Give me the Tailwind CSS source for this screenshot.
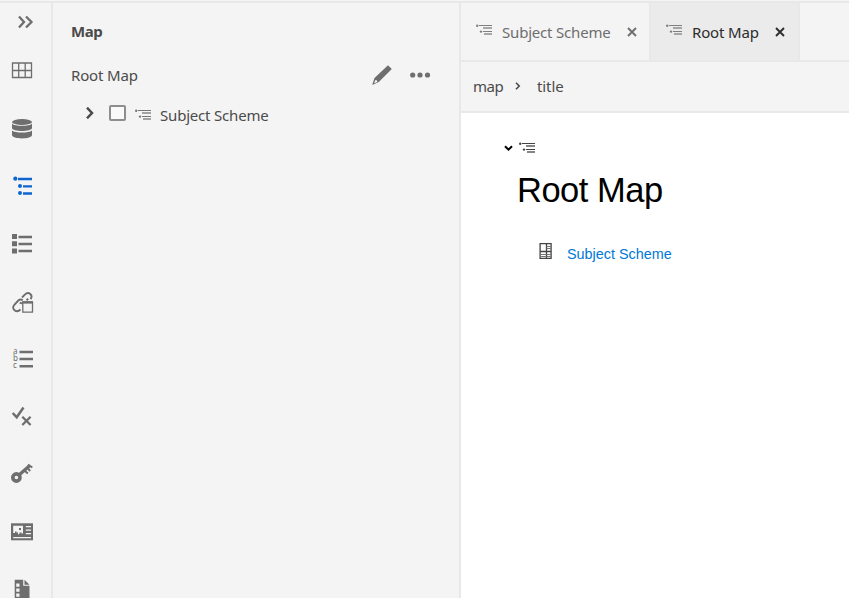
<!DOCTYPE html>
<html lang="en">
<head>
<meta charset="utf-8">
<title>Map editor</title>
<script src="https://cdn.jsdelivr.net/npm/@tailwindcss/browser@4"></script>
</head>
<body class="h-screen overflow-hidden bg-[#f4f4f4] font-['Noto_Sans',sans-serif] text-[15px] text-[#4b4b4b]">
<svg class="hidden">
  <symbol id="map" viewBox="0 0 16 13"><circle cx="1.200" cy="1.700" r="1.200"/><circle cx="5" cy="7.600" r="1.200"/><path d="M3 1h13v1H3zM7 7h9v1H7z"/><path opacity=".65" d="M7 3h9v2H7zM8 9h8v2H8z"/></symbol>
  <symbol id="close" viewBox="0 0 10 10"><path d="M1 1l8 8M9 1l-8 8" fill="none" stroke="currentColor" stroke-width="1.900"/></symbol>
</svg>
<div class="flex h-full flex-col border-t border-[#f4f4f4]">
<div class="flex min-h-0 flex-1 border-t-2 border-[#e8e8e8]">
  <nav class="grid w-[53px] shrink-0 grid-rows-[39px_58px_58px_57px_58px_58px_57px_57px_58px_58px_58px] overflow-hidden border-r-2 border-[#e8e8e8] pl-[10px] text-[#6e6e6e] [&_svg]:block [&_svg]:h-6 [&_svg]:w-6">
    <div class="pt-[7px]"><svg fill="none" stroke="currentColor" stroke-width="2.300"><path d="M9 6.500l5 5.500-5 5.500M16 6.500l5.500 5.500-5.500 5.500"/></svg></div>
    <div class="pt-[17px]"><svg fill="none" stroke="currentColor" stroke-width="1.300"><path d="M2.500 4h19v14.500h-19zM2.500 11.500h19M8.700 4v14.500M15.200 4v14.500"/></svg></div>
    <div class="pt-[17px]"><svg fill="currentColor"><ellipse cx="12" cy="5" rx="10" ry="3"/><path d="M2 6.800C5 9.500 19 9.500 22 6.800V11c0 4-20 4-20 0zM2 13.500c3 2.700 17 2.700 20 0V18c0 4.500-20 4.500-20 0z"/></svg></div>
    <div class="pt-[17px] text-[#0d66d0]"><svg fill="currentColor"><circle cx="5.300" cy="3.700" r="2.100"/><circle cx="10" cy="10.900" r="2"/><circle cx="10" cy="18" r="2"/><path d="M8 2.800h14v2.400H8zM13 10.200h9v2.400h-9zM13 17.300h9v2.400h-9z"/></svg></div>
    <div class="pt-[17px]"><svg fill="currentColor"><path d="M2 2h5v5H2zM2 9.300h5v5H2zM2 16.500h5v5H2zM8.500 3.800H22v2.400H8.500zM8.500 10.800H22v2.400H8.500zM8.500 17.800H22v2.400H8.500z"/></svg></div>
    <div class="pt-[17px]"><svg fill="none" stroke="currentColor" stroke-width="1.900"><path d="M10.500 19.500c-2 2-4.300 2-6 .7-1.900-1.500-1.700-3.700-.2-5.400l4-4.300c1.500-1.300 3-1.300 4.500-.3M12 7.500l2.800-2.800c2-2 3.900-2 5.500-.7 1.600 1.500 1.500 3.500.2 5.200M9.800 12.500c1 .8 1.500.9 2.500.8M16.500 10.200l1.700-1.500"/><path d="M12.800 12.500h9.700v9.700h-9.700z" fill="#f4f4f4" stroke-width="1.300"/><path d="M12.200 12.300h10.800" stroke-width="2.400"/></svg></div>
    <div class="pt-[17px]"><svg fill="currentColor" class="overflow-visible"><path d="M9.500 2.800H23v2.400H9.500zM9.500 9.800H23v2.400H9.500zM9.500 17H23v2.400H9.500z"/></svg>
      <div class="-mt-[25px] ml-[3px] flex h-[24px] w-[5px] flex-col text-[8px] leading-[7px]"><span class="h-[7px]">a</span><span class="h-[7px]">b</span><span class="h-[7px]">c</span></div></div>
    <div class="pt-[17px]"><svg fill="none" stroke="currentColor" stroke-width="2.500"><path d="M2.700 8l4 4.300L13.500 2.500"/><path d="M12.300 11.700l8.300 8.300M20.600 11.700L12.300 20" stroke-width="2.300"/></svg></div>
    <div class="pt-[17px]"><svg fill="none" stroke="currentColor"><circle cx="6.400" cy="15.500" r="3.600" stroke-width="3.600"/><path d="M9 13L19.500 3.800" stroke-width="3.200"/><path d="M18 2.500l4.300 3M14.500 8.500l3.300 3M17.500 6l2.700 3" stroke-width="2"/></svg></div>
    <div class="pt-[17px]"><svg fill="currentColor"><path d="M1 3.300h22v17H1z"/><path fill="#f4f4f4" d="M3.200 5.700h9.800v7.800h-1.500v-1h-2v1.800H8v-1.800H6.500v-1H5v1.500H3.200zM15.800 6H21v1.200h-5.200zM15.800 9.500H21v1.200h-5.200zM15.800 13H21v1.200h-5.200zM3.200 17H21v1.200H3.200z"/><path d="M9 8h2v2H9z"/></svg></div>
    <div class="pt-[17px]"><svg fill="currentColor"><path d="M4.700 1.700h8.500v6h6.300V24H4.700zM14.500 1.700l5 5h-5z"/><path fill="#f4f4f4" d="M6.200 5.500h3.300v3.300H6.200zM6.200 10.500h3.300v3.300H6.200zM6.200 15.500h3.300v3.300H6.200z"/></svg></div>
  </nav>

  <aside class="w-[408px] shrink-0 border-r-2 border-[#e8e8e8] pl-[18px]">
    <h2 class="mt-[16px] h-[25px] text-[15px] leading-[24px] font-bold tracking-[-0.450px]">Map</h2>
    <div class="mt-[18px] flex h-[26px] items-center">
      <span class="w-[300px] leading-6 tracking-[-0.150px]">Root Map</span>
      <svg class="h-[22px] w-[22px] text-[#6e6e6e]" fill="currentColor"><path fill-rule="evenodd" d="M17 1.300l3.800 3.800-13 13L1.200 21l2.300-7zM4.400 16L3.100 19.200l3.200-1.300c0-1.400-.7-1.900-1.900-1.900z"/></svg>
      <svg class="ml-[17px] h-[6px] w-[22px] text-[#6e6e6e]" fill="currentColor"><circle cx="2.700" cy="3" r="2.600"/><circle cx="10" cy="3" r="2.600"/><circle cx="17.500" cy="3" r="2.600"/></svg>
    </div>
    <div class="mt-[14px] flex h-[26px] items-center">
      <svg class="ml-[14px] mb-[5px] h-[12px] w-[10px]" fill="none" stroke="currentColor" stroke-width="2.500"><path d="M2 .7l5 5.300-5 5.300"/></svg>
      <span class="mb-[4px] ml-[14px] h-[16px] w-[17px] rounded-[2px] border-2 border-[#8e8e8e] bg-[#fafafa]"></span>
      <svg class="ml-[9px] h-[13px] w-[16px] text-[#777]" fill="currentColor"><use href="#map"/></svg>
      <span class="ml-[9px] leading-6 tracking-[-0.190px] whitespace-nowrap">Subject Scheme</span>
    </div>
  </aside>

  <main class="flex min-w-0 flex-1 flex-col">
    <div class="flex h-[59px] shrink-0 border-b-2 border-[#e8e8e8]">
      <div class="flex w-[190px] items-center border-r-2 border-[#e8e8e8] pl-[15px] text-[#6e6e6e]">
        <svg class="mb-[3px] h-[13px] w-[16px] text-[#808080]" fill="currentColor"><use href="#map"/></svg>
        <span class="mt-[2px] ml-[10px] w-[125px] tracking-[-0.190px] whitespace-nowrap">Subject Scheme</span>
        <svg class="h-[10px] w-[10px]"><use href="#close"/></svg>
      </div>
      <div class="flex w-[149px] items-center border-r-2 border-[#e8e8e8] bg-[#ebebeb] pl-[15px] text-[#2c2c2c]">
        <svg class="mb-[3px] h-[13px] w-[16px] text-[#808080]" fill="currentColor"><use href="#map"/></svg>
        <span class="mt-[2px] ml-[10px] w-[83px] tracking-[-0.150px] whitespace-nowrap">Root Map</span>
        <svg class="h-[10px] w-[10px]"><use href="#close"/></svg>
      </div>
    </div>
    <div class="flex h-[51px] shrink-0 items-center border-b-2 border-[#e8e8e8] pl-[12px]">
      <span class="w-[42px] tracking-[-0.500px]">map</span>
      <svg class="mb-[2px] h-[8px] w-[6px]" fill="none" stroke="currentColor" stroke-width="1.600"><path d="M1 .7l3.200 3.300L1 7.300"/></svg>
      <span class="ml-[16px] tracking-[-0.100px]">title</span>
    </div>
    <section class="flex-1 bg-white pl-[43px] font-['Liberation_Sans',Arial,sans-serif]">
      <div class="flex h-[42px] items-center pt-[28px]">
        <svg class="h-[7px] w-[9px] text-black" fill="none" stroke="currentColor" stroke-width="2"><path d="M1 1.200l3.500 3.500L8 1.200"/></svg>
        <svg class="ml-[6px] h-[13px] w-[16px] text-[#444]" fill="currentColor"><use href="#map"/></svg>
      </div>
      <h1 class="mt-[14px] ml-[13px] text-[34.500px] leading-[42px] tracking-[-0.500px] text-black">Root Map</h1>
      <div class="mt-[32px] ml-[35px] flex items-center">
        <svg class="mb-[5px] h-[16px] w-[13px]" fill="none" stroke="#444" stroke-width="1"><path stroke-width="1.300" d="M1.100.600h11v14.800h-11zM7.500 .5v15M1 8.500h11"/><path stroke="#777" d="M7.500 3.500h4.500M7.500 5.500h4.500M7.500 11.500h4.500M7.500 13.500h4.500M1 11.500h6.500M1 13.500h6.500"/></svg>
        <a class="ml-[15px] text-[14.400px] leading-[20px] text-[#0078d7]">Subject Scheme</a>
      </div>
    </section>
  </main>
</div>
</div>
</body>
</html>
